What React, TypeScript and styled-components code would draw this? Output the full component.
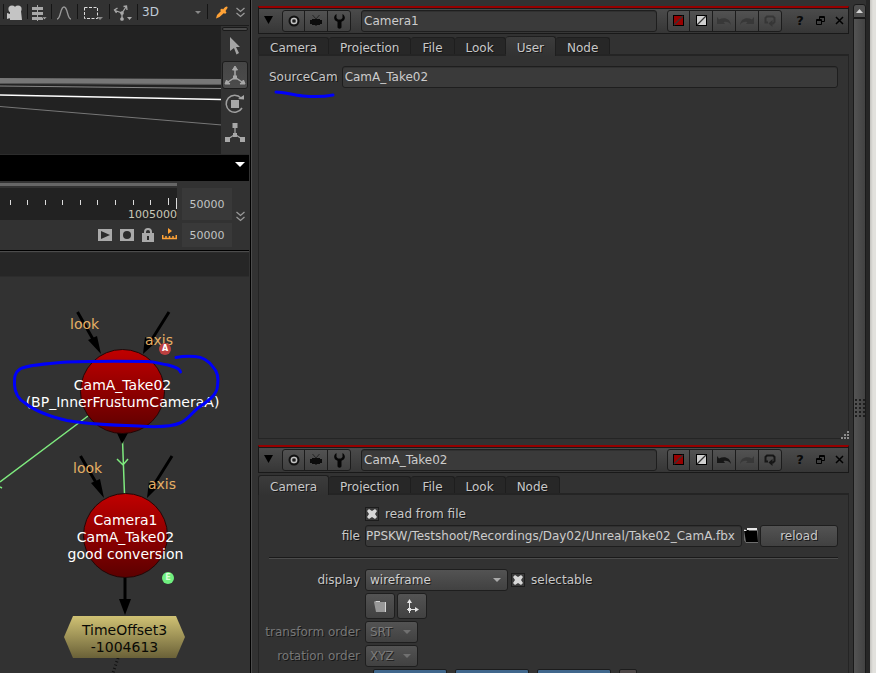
import React, { useState } from "react";
import styled, { createGlobalStyle, css } from "styled-components";

const GlobalStyle = createGlobalStyle`
  *, *::before, *::after { box-sizing: border-box; }
  html, body { margin: 0; height: 100%; }
  body {
    background: #323232;
    color: #c8c8c8;
    font-family: "DejaVu Sans", Verdana, sans-serif;
    font-size: 12px;
    line-height: 16px;
    overflow: hidden;
  }
  button, input, select { font: inherit; color: inherit; margin: 0; }
  button { padding: 0; border: 0; background: none; }
  svg { display: block; }
`;

/* ---------- window shell ---------- */

const Shell = styled.div`
  display: grid;
  grid-template-columns: 252px minmax(0, 1fr) 13px 4px 6px;
  height: 100vh;
  overflow: hidden;
`;

const LeftColumn = styled.div`
  display: flex;
  flex-direction: column;
  min-height: 0;
  padding-right: 2px;
  border-right: 1px solid #4c4c4c;
  box-shadow: inset -1px 0 #000;
`;

const RightColumn = styled.main`
  min-width: 0;
  padding: 6px 4px 0 6px;
  overflow: hidden;
`;

const WindowEdge = styled.div`
  background: #262626;
`;

const Desktop = styled.div`
  background: linear-gradient(90deg, #c4c3bf, #e2e1dd 3px);
`;

/* ---------- viewer toolbar ---------- */

const ToolBar = styled.div`
  display: flex;
  height: 26px;
  flex: none;
  padding-left: 3px;
  border-bottom: 1px solid #1c1c1c;
`;

const ToolCell = styled.button<{ $w: number }>`
  display: flex;
  align-items: center;
  justify-content: center;
  width: ${(p) => p.$w}px;
  position: relative;
  svg { flex: none; }
  &::before {
    content: "";
    position: absolute;
    left: 0;
    top: 4px;
    bottom: 6px;
    border-left: 1px solid #151515;
  }
`;

const ModeCell = styled.label`
  display: grid;
  width: 70px;
  align-items: center;
  margin: 4px 0 5px;
  border-left: 1px solid #151515;
  > * { grid-area: 1 / 1; }
  > svg { justify-self: end; margin-right: 6px; pointer-events: none; }
`;

const ModeSelect = styled.select`
  appearance: none;
  width: 100%;
  border: 0;
  padding: 0 4px;
  background: none;
  color: #c0ccd8;
`;

/* ---------- 3D viewport ---------- */

const Viewport = styled.div`
  display: flex;
  flex: none;
  height: 128px;
`;

const Scene = styled.svg`
  flex: 1;
  min-width: 0;
  height: 128px;
  background: #222;
`;

const ToolStrip = styled.div`
  display: flex;
  flex-direction: column;
  width: 28px;
  padding: 1px 1px 0;
`;

const StripGrip = styled.div`
  height: 4px;
  flex: none;
  border: 1px solid #1a1a1a;
  border-radius: 2px;
  background: #4a4a4a;
  margin-bottom: 1px;
`;

const StripButton = styled.button<{ $on?: boolean }>`
  display: grid;
  place-items: center;
  height: 28px;
  margin-bottom: 1px;
  flex: none;
  border: 1px solid transparent;
  border-radius: 3px;
  ${(p) => p.$on && css`
    border-color: #1c1c1c;
    background: linear-gradient(#454545, #4c4c4c);
  `}
`;

const InfoBar = styled.div`
  display: flex;
  flex: none;
  justify-content: flex-end;
  height: 27px;
  padding: 7px 4px 0;
  border-top: 1px solid #2c2c2c;
  background: #000;
`;

/* ---------- timeline ---------- */

const Timeline = styled.div`
  display: grid;
  flex: none;
  grid-template-columns: minmax(0, 1fr) 50px 17px;
  height: 69px;
  padding-top: 2px;
`;

const TrackSide = styled.div`
  padding-right: 5px;
`;

const RangeBar = styled.div`
  height: 3px;
  background: #666;
  margin-bottom: 2px;
`;

const Track = styled.div`
  display: flex;
  flex-direction: column;
  height: 32px;
  background: #222;
  svg { flex: none; }
`;

const FrameLabel = styled.span`
  align-self: flex-end;
  font-size: 11px;
  line-height: 11px;
  color: #c8c8b8;
`;

const TransportRow = styled.div`
  display: flex;
  justify-content: flex-end;
  align-items: center;
  gap: 8px;
  height: 29px;
  button { flex: none; }
`;

const FrameFields = styled.div`
  display: flex;
  flex-direction: column;
  gap: 3px;
  padding-top: 5px;
`;

const FrameInput = styled.input<{ $h: number }>`
  width: 50px;
  height: ${(p) => p.$h}px;
  border: 0;
  padding: 1px 0 0;
  background: #393939;
  text-align: center;
  color: #c0c4c4;
  font-size: 11px;
`;

const MoreButton = styled.button`
  display: grid;
  place-items: center;
  align-self: center;
  height: 20px;
`;

const GraphHeader = styled.div`
  flex: none;
  height: 27px;
  border-top: 1px solid #000;
  border-bottom: 1px solid #2c2c2c;
  background: #262626;
  box-shadow: inset 0 1px #4c4c4c, inset 0 2px #2c2c2c;
`;

/* ---------- node graph (free canvas) ---------- */

const Graph = styled.div`
  position: relative;
  flex: 1;
  min-height: 0;
  overflow: hidden;
  font-size: 14px;
  line-height: 17px;
`;

const GraphLayer = styled.svg`
  position: absolute;
  left: 0;
  top: 0;
  width: 250px;
  height: 396px;
  pointer-events: none;
`;

const NodeBox = styled.div<{ $x: number; $y: number; $w: number; $h: number }>`
  position: absolute;
  left: ${(p) => p.$x}px;
  top: ${(p) => p.$y}px;
  width: ${(p) => p.$w}px;
  height: ${(p) => p.$h}px;
  display: flex;
  flex-direction: column;
  align-items: center;
  justify-content: center;
  padding-top: 4px;
  white-space: nowrap;
`;

const CameraNode = styled(NodeBox)`
  border: 1px solid #240505;
  border-radius: 50%;
  background: linear-gradient(#c00000, #5c0000);
  color: #fff;
`;

const TimeNode = styled(NodeBox)`
  background: linear-gradient(#d0c274, #6a6138);
  clip-path: polygon(9px 0, calc(100% - 9px) 0, 100% 50%, calc(100% - 9px) 100%, 9px 100%, 0 50%);
  color: #0a0a05;
`;

const PortLabel = styled.span<{ $x: number; $y: number }>`
  position: absolute;
  left: ${(p) => p.$x}px;
  top: ${(p) => p.$y}px;
  color: #e6b065;
`;

const Badge = styled.span<{ $x: number; $y: number; $color: string; $ink: string }>`
  position: absolute;
  left: ${(p) => p.$x}px;
  top: ${(p) => p.$y}px;
  width: 12px;
  height: 12px;
  border-radius: 50%;
  background: ${(p) => p.$color};
  color: ${(p) => p.$ink};
  font-size: 8px;
  font-weight: bold;
  line-height: 12px;
  text-align: center;
`;

/* ---------- property panels ---------- */

const Panel = styled.section`
  margin-bottom: 6px;
`;

const PanelHeader = styled.header`
  display: flex;
  align-items: center;
  height: 28px;
  border: 1px solid #191919;
  border-top: 2px solid #960000;
  background: linear-gradient(#191919 1px, #4b4b4b 1px, #363636);
`;

const Fold = styled.button`
  width: 23px;
  height: 22px;
  padding-left: 5px;
  padding-bottom: 2px;
  display: flex;
  align-items: center;
`;

const ButtonGroup = styled.div`
  display: flex;
  border: 1px solid #1c1c1c;
  border-radius: 3px;
  background: linear-gradient(#525252, #404040);
  button {
    width: 23px;
    height: 20px;
    display: grid;
    place-items: center;
  }
  button:first-child { width: 21px; }
  button + button { border-left: 1px solid #1c1c1c; }
`;

const fieldStyle = css`
  height: 22px;
  min-width: 0;
  padding: 0 2px;
  border: 1px solid #1e1e1e;
  border-radius: 3px;
  background: #3a3a3a;
  color: #ccc;
  box-shadow: inset 0 1px #303030;
`;

const NameInput = styled.input`
  ${fieldStyle}
  flex: 1;
  padding-top: 1px;
  margin: 0 10px;
`;

const WindowButtons = styled.div`
  display: flex;
  padding-left: 8px;
  button {
    width: 20px;
    height: 22px;
    display: grid;
    place-items: center;
    color: #080808;
    font-weight: bold;
    font-size: 13px;
  }
  button:last-child { width: 18px; }
`;

const TabRow = styled.div`
  display: flex;
  align-items: flex-end;
  height: 20px;
`;

const Tab = styled.button<{ $active: boolean }>`
  height: 17px;
  padding: 4px 11px 0;
  line-height: 12px;
  border: 1px solid #1e1e1e;
  border-bottom: 0;
  border-left-width: 0;
  border-radius: 3px 3px 0 0;
  background: #272727;
  text-shadow: 1px 1px #161616;
  &:first-child { border-left-width: 1px; }
  ${(p) => p.$active && css`
    height: 20px;
    margin-bottom: -2px;
    padding: 2px 11px 0;
    background: linear-gradient(#3c3c3c, #323232);
    position: relative;
    z-index: 1;
  `}
`;

const PanelBody = styled.div<{ $minHeight: number }>`
  position: relative;
  min-height: ${(p) => p.$minHeight}px;
  border: 1px solid #242424;
  border-top-width: 2px;
  padding: 10px 10px 0;
`;

const Grip = styled.svg`
  position: absolute;
  right: -1px;
  bottom: -2px;
`;

const SourceRow = styled.div`
  display: flex;
  align-items: center;
  gap: 4px;
  input { flex: 1; }
`;

const SourceLabel = styled.label`
  position: relative;
  text-shadow: 1px 1px #161616;
`;

const Underline = styled.svg`
  position: absolute;
  left: 5px;
  top: 20px;
`;

const TextInput = styled.input`
  ${fieldStyle}
`;

const Form = styled.div`
  display: grid;
  grid-template-columns: 91px minmax(0, 1fr);
  column-gap: 5px;
  row-gap: 2px;
  align-items: center;
  text-shadow: 1px 1px #161616;
`;

const Label = styled.label<{ $dim?: boolean }>`
  justify-self: end;
  white-space: nowrap;
  color: ${(p) => (p.$dim ? "#777" : "#c8c8c8")};
`;

const Line = styled.div<{ $gap?: number; $indent?: number }>`
  grid-column: 2;
  display: flex;
  align-items: center;
  gap: ${(p) => p.$gap ?? 2}px;
  padding-left: ${(p) => p.$indent ?? 0}px;
  min-height: 18px;
`;

const PathInput = styled(TextInput)`
  flex: 1;
  padding: 0;
`;

const Rule = styled.hr`
  grid-column: 1 / -1;
  width: 100%;
  height: 2px;
  margin: 8px 0;
  border: 0;
  background: linear-gradient(#1a1a1a 1px, #4c4c4c 1px);
`;

const raised = css`
  border: 1px solid #1e1e1e;
  border-radius: 3px;
  background: linear-gradient(#535353, #414141);
`;

const ReloadButton = styled.button`
  ${raised}
  width: 78px;
  height: 22px;
  text-shadow: 1px 1px #161616;
`;

const BrowseButton = styled.button`
  width: 18px;
  height: 22px;
  display: grid;
  place-items: center;
`;

const IconButton = styled.button`
  ${raised}
  width: 30px;
  height: 26px;
  display: grid;
  place-items: center;
`;

const CheckLabel = styled.label`
  display: flex;
  align-items: center;
  gap: 6px;
`;

const CheckBox = styled.input.attrs({ type: "checkbox" })`
  appearance: none;
  width: 14px;
  height: 14px;
  border: 1px solid #1c1c1c;
  background: #3a3a3a;
  display: grid;
  place-items: center;
  &:checked::before {
    content: "";
    width: 10px;
    height: 10px;
    background: #d6d6d6;
    clip-path: polygon(0 2px, 2px 0, 5px 2px, 8px 0, 10px 2px, 8px 5px, 10px 8px, 8px 10px, 5px 8px, 2px 10px, 0 8px, 2px 5px);
  }
`;

const SelectWrap = styled.span<{ $w: number; $dim?: boolean }>`
  display: grid;
  align-items: center;
  width: ${(p) => p.$w}px;
  color: ${(p) => (p.$dim ? "#7c7c7c" : "#d0d0d0")};
  > * { grid-area: 1 / 1; }
  > svg { justify-self: end; margin-right: 7px; pointer-events: none; }
`;

const Select = styled.select`
  ${raised}
  appearance: none;
  width: 100%;
  height: 22px;
  padding: 0 4px;
  opacity: 1;
  text-shadow: 1px 1px #222;
`;

const ValueInput = styled.input<{ $w: number; $plain?: boolean }>`
  width: ${(p) => p.$w}px;
  height: 22px;
  padding: 0 4px;
  border: 1px solid #1c1c1c;
  border-radius: 2px;
  background: ${(p) => (p.$plain ? "#4e4848" : "#40678c")};
`;

/* ---------- scrollbar ---------- */

const ScrollTrack = styled.div`
  display: flex;
  flex-direction: column;
  padding-top: 4px;
`;

const ScrollUp = styled.button`
  display: grid;
  place-items: center;
  height: 14px;
  flex: none;
  border: 1px solid #1a1a1a;
  border-radius: 3px 3px 0 0;
  background: #4f4f4f;
`;

const ScrollThumb = styled.div`
  flex: 1;
  display: grid;
  justify-items: center;
  align-content: start;
  padding-top: 380px;
  border: 1px solid #1a1a1a;
  border-bottom: 0;
  background: linear-gradient(90deg, #545454, #424242);
`;

/* ---------- icons ---------- */

const Caret = ({ w = 8, color = "#888" }: { w?: number; color?: string }) => (
  <svg width={w} height={w / 2} viewBox="0 0 8 4">
    <path d="M0 0h8L4 4z" fill={color} />
  </svg>
);

const DoubleChevron = () => (
  <svg width="9" height="11" viewBox="0 0 9 11" fill="none" stroke="#999" strokeWidth="1.3">
    <path d="M.5 1l4 3.5 4-3.5M.5 6l4 3.5 4-3.5" />
  </svg>
);

const CameraIcon = () => (
  <svg width="16" height="16" viewBox="0 0 16 16" fill="#c4c4c4">
    <circle cx="5" cy="4" r="3.6" />
    <circle cx="11" cy="4" r="3.6" />
    <path d="M3 6h11l1 9H3zM3 9L0 8v6l3-1z" />
  </svg>
);

const AlignIcon = () => (
  <svg width="16" height="16" viewBox="0 0 16 16" fill="#a8a8a8">
    <path d="M1 2h11v3H1zM1 7h11v3H1zM1 12h11v3H1zM6 0h1v16H6z" />
    <path d="M11 12h5l-2.500 2.500z" stroke="#323232" strokeWidth=".5" />
  </svg>
);

const CurveIcon = () => (
  <svg width="16" height="14" viewBox="0 0 16 14" fill="none" stroke="#999" strokeWidth="1.300">
    <path d="M1 13c4 0 3-12 7-12s3 12 7 12" />
  </svg>
);

const MarqueeIcon = () => (
  <svg width="20" height="14" viewBox="0 0 20 14">
    <path d="M1.500 1.500h13v11h-13z" fill="none" stroke="#dcdcdc" strokeDasharray="3 1.500" />
    <path d="M14 11h6l-3 3z" fill="#888" />
  </svg>
);

const SkeletonIcon = () => (
  <svg width="20" height="16" viewBox="0 0 20 16" fill="none" stroke="#a8a8a8" strokeWidth="1.300">
    <path d="M9 8L2 5.500M9 8l4-6M9 8v6M4.500 3L1.500 5l2 3M10.500 1.500l3-.5.5 4" />
    <circle cx="9" cy="8" r="1.200" fill="#a8a8a8" />
    <circle cx="9" cy="14" r="1.200" fill="#a8a8a8" />
    <path d="M14 12h5l-2.500 3z" fill="#a8a8a8" stroke="none" />
  </svg>
);

const DropperIcon = () => (
  <svg width="12" height="13" viewBox="0 0 12 13" fill="#ffa236">
    <path d="M0 12.500l1-3.500 4-4-1-1 2-1.500 1 1C9 .5 12-.5 11.500 2L9.500 5l1 1.500L9 8 8 7l-4.500 4z" />
  </svg>
);

const PointerIcon = () => (
  <svg width="12" height="20" viewBox="0 0 12 20" fill="#a4a4a4">
    <path d="M1 1l10 10H7l3 6-2.500 1.500L5 12l-4 3z" />
  </svg>
);

const MoveIcon = () => (
  <svg width="22" height="21" viewBox="0 0 22 21" fill="#a8a8a8" stroke="#a8a8a8">
    <path d="M11 13V4M10 13l-6 4M12 13l6 4" fill="none" strokeWidth="1.500" />
    <path d="M11 1L8.500 5h5zM1 19l1.500-4L6 19zM21 19l-1.500-4L16 19z" />
    <rect x="9.500" y="11" width="3" height="3" />
  </svg>
);

const RotateIcon = () => (
  <svg width="20" height="20" viewBox="0 0 20 20">
    <path d="M16 4A8.500 8.500 0 1 0 17 14" fill="none" stroke="#a0a0a0" strokeWidth="1.500" />
    <path d="M13 5l6 .5V1z" fill="#a8a8a8" />
    <rect x="6" y="6" width="8" height="8" fill="#a8a8a8" />
  </svg>
);

const ScaleIcon = () => (
  <svg width="20" height="20" viewBox="0 0 20 20" fill="#a8a8a8">
    <path d="M7.500 0h5v5h-5zM0 14h5v5H0zM15 14h5v5h-5zM8 10h4v4H8z" />
    <path d="M10 4v8M9 12l-6 4M11 12l6 4" stroke="#a8a8a8" strokeWidth="1.200" />
  </svg>
);

const TargetIcon = () => (
  <svg width="14" height="14" viewBox="0 0 14 14" fill="none">
    <circle cx="7" cy="7" r="4.500" stroke="#101010" strokeWidth="2" />
    <circle cx="7" cy="7" r="2.700" stroke="#c4c4c4" strokeWidth="1.200" />
    <circle cx="7" cy="7" r="1" fill="#101010" />
  </svg>
);

const PlugIcon = () => (
  <svg width="12" height="11" viewBox="0 0 12 11">
    <path d="M0 5h2V4h8v1h2v4h-2v1H7l-1 1-1-1H2V9H0z" fill="#0c0c0c" />
    <path d="M2.500 0L6 4l3.500-4" fill="none" stroke="#262626" />
  </svg>
);

const WrenchIcon = () => (
  <svg width="13" height="16" viewBox="0 0 13 16" fill="#060606">
    <path d="M3.500 1C0 3 .5 7.500 4.500 8.700V14c0 2.300 4 2.300 4 0V8.700C12.500 7.500 13 3 9.500 1v4L8 6.500H5L3.500 5z" />
  </svg>
);

const SlashSquare = ({ fill }: { fill: string }) => (
  <svg width="11" height="11" viewBox="0 0 11 11">
    <rect x=".5" y=".5" width="10" height="10" fill={fill} stroke="#000" />
    <path d="M1 10L10 1" stroke="#333" strokeWidth="1.300" />
  </svg>
);

const UndoIcon = ({ on, flip }: { on: boolean; flip?: boolean }) => (
  <svg width="14" height="8" viewBox="0 0 14 8" fill={on ? "#161616" : "#383838"}>
    <path
      transform={flip ? "translate(14 0) scale(-1 1)" : undefined}
      d="M0 0l2 2.500C7 0 13 1 14 8c-2-3-4-3.500-7.500-3L8 7H0z"
    />
  </svg>
);

const RevertIcon = ({ on }: { on: boolean }) => (
  <svg width="12" height="12" viewBox="0 0 12 12">
    <path d="M4 7.500H1.500V3L3 1.500h6L10.500 3v4L9 8.500H7" fill="none" stroke={on ? "#161616" : "#363636"} strokeWidth="2" />
    <path d="M8.500 5v7L4.500 8.500z" fill={on ? "#161616" : "#363636"} />
  </svg>
);

const FloatIcon = () => (
  <svg width="9" height="9" viewBox="0 0 9 9" fill="none" stroke="#000">
    <path d="M.5 3.500h5v5h-5zM0 4.500h5M3.500 3V.5h5v5H6M3 1.500h5" />
  </svg>
);

const CloseIcon = () => (
  <svg width="9" height="9" viewBox="0 0 9 9" stroke="#000" strokeWidth="1.500">
    <path d="M1 1l7 7M8 1L1 8" />
  </svg>
);

const FilmIcon = () => (
  <svg width="16" height="16" viewBox="0 0 16 16">
    <path d="M1 1h13l1 2v12H3L1 12z" fill="#6e6e6e" />
    <path d="M1 2l4-1 1 2h8l1 11H3z" fill="#000" />
    <path d="M4 0h10v2H4zM1 2h3l-1 1H1z" fill="#e8e8e8" />
  </svg>
);

const FolderIcon = () => (
  <svg width="13" height="13" viewBox="0 0 13 13">
    <path d="M0 2l1-1h4l1 1h6v10H2z" fill="#989898" />
    <path d="M2 1h4v1H2zM11 2h1v10h-1z" fill="#d4d4d4" />
  </svg>
);

const AxesIcon = () => (
  <svg width="13" height="15" viewBox="0 0 13 15" fill="#e4e4e4">
    <path d="M3 2h1v12H3zM1 10h10v1H1zM3.500 0L6 4H1zM9 8l4 2.500L9 13zM2 9h3v3H2z" />
  </svg>
);

/* ---------- composite pieces ---------- */

const TICKS = [10, 27, 45, 62, 80, 97, 115, 133, 150];

function ViewerTools() {
  return (
    <ToolBar>
      <ToolCell $w={24} aria-label="Camera"><CameraIcon /></ToolCell>
      <ToolCell $w={24} aria-label="Align"><AlignIcon /></ToolCell>
      <ToolCell $w={26} aria-label="Curve"><CurveIcon /></ToolCell>
      <ToolCell $w={32} aria-label="Selection"><MarqueeIcon /></ToolCell>
      <ToolCell $w={28} aria-label="Skeleton"><SkeletonIcon /></ToolCell>
      <ModeCell>
        <ModeSelect aria-label="View mode"><option>3D</option></ModeSelect>
        <Caret w={6} />
      </ModeCell>
      <ToolCell $w={29} aria-label="Pick colour"><DropperIcon /></ToolCell>
      <MoreButton aria-label="More tools"><DoubleChevron /></MoreButton>
    </ToolBar>
  );
}

function Viewer() {
  return (
    <Viewport>
      <Scene viewBox="0 26 221 128" preserveAspectRatio="none">
        <path d="M0 78l222 1v6L0 83z" fill="#777" />
        <path d="M0 83.500l222 1" stroke="#555" />
        <path d="M0 86l222 2.500" stroke="#888" />
        <path d="M0 95l222 4.500" stroke="#fff" strokeWidth="1.300" />
        <path d="M0 106.500L222 125" stroke="#777" />
      </Scene>
      <ToolStrip>
        <StripGrip />
        <StripButton aria-label="Select"><PointerIcon /></StripButton>
        <StripButton aria-label="Translate" $on><MoveIcon /></StripButton>
        <StripButton aria-label="Rotate"><RotateIcon /></StripButton>
        <StripButton aria-label="Scale"><ScaleIcon /></StripButton>
      </ToolStrip>
    </Viewport>
  );
}

function TimelineBar() {
  return (
    <Timeline>
      <TrackSide>
        <RangeBar />
        <Track>
          <svg width="177" height="21" viewBox="0 0 177 21">
            {TICKS.map((x) => <path key={x} d={`M${x + 0.5} 12v5`} stroke="#ddd" />)}
            <path d="M168.500 10v7M176.500 10v11" stroke="#ddd" />
          </svg>
          <FrameLabel>1005000</FrameLabel>
        </Track>
        <TransportRow>
          <button aria-label="Play">
            <svg width="14" height="12"><path d="M0 0h14v12H0z" fill="#aaa" /><path d="M3 2l9 4-9 4z" fill="#2c2c2c" /></svg>
          </button>
          <button aria-label="Record">
            <svg width="14" height="12"><path d="M0 0h14v12H0z" fill="#aaa" /><circle cx="7" cy="6" r="4" fill="#2c2c2c" /></svg>
          </button>
          <button aria-label="Lock range">
            <svg width="12" height="14">
              <path d="M3 7V4a3 3 0 0 1 6 0v3" fill="none" stroke="#aaa" strokeWidth="2" />
              <path d="M0 5h12v9H0z" fill="#aaa" /><path d="M5 8h2v4H5z" fill="#2c2c2c" />
            </svg>
          </button>
          <button aria-label="Frame range">
            <svg width="15" height="13" fill="none" stroke="#ffa236" strokeWidth="1.500">
              <path d="M.7 7v3.500h13.600V7M4 10V8M7.500 10V8M11 10V8" />
              <path d="M6 0l4 3-4 3z" fill="#ffa236" stroke="none" />
            </svg>
          </button>
        </TransportRow>
      </TrackSide>
      <FrameFields>
        <FrameInput $h={32} aria-label="Last frame" defaultValue="50000" />
        <FrameInput $h={24} aria-label="Range end" defaultValue="50000" />
      </FrameFields>
      <MoreButton aria-label="More timeline options"><DoubleChevron /></MoreButton>
    </Timeline>
  );
}

function NodeGraph() {
  return (
    <Graph>
      <GraphLayer viewBox="0 277 250 396">
        <g stroke="#7eea7e" strokeWidth="1.500" fill="none">
          <path d="M88 416L0 482M122.500 440l2 54M117 459l6 6 5-6" />
          <path d="M0 487l2 1" />
        </g>
        <g stroke="#000" strokeWidth="3">
          <path d="M77.500 312L94 341M169 312l-20 32M80.500 456L98 486M172 456l-20 32M125 577v24" />
        </g>
        <path d="M101 354l-13-14 9-4zM143 354l2-17 10 6zM104 498L91 483l9-4zM147 498l2-17 9 6zM119 599h12l-6 16zM117 433h11l-6 11z" />
        <path d="M118 658l-5 15" stroke="#111" strokeWidth="3" strokeDasharray="1 2.500" />
      </GraphLayer>
      <CameraNode $x={80} $y={72} $w={85} $h={85}>
        <span>CamA_Take02</span>
        <span>(BP_InnerFrustumCameraA)</span>
      </CameraNode>
      <CameraNode $x={83} $y={216} $w={85} $h={85}>
        <span>Camera1</span>
        <span>CamA_Take02</span>
        <span>good conversion</span>
      </CameraNode>
      <TimeNode $x={64} $y={339} $w={121} $h={42}>
        <span>TimeOffset3</span>
        <span>-1004613</span>
      </TimeNode>
      <PortLabel $x={70} $y={39}>look</PortLabel>
      <PortLabel $x={145} $y={55}>axis</PortLabel>
      <PortLabel $x={73} $y={183}>look</PortLabel>
      <PortLabel $x={148} $y={199}>axis</PortLabel>
      <Badge $x={159} $y={66} $color="#bd4040" $ink="#fff">A</Badge>
      <Badge $x={162} $y={295} $color="#70f080" $ink="#d8ffd8">E</Badge>
      <GraphLayer viewBox="0 277 250 396">
        <path
          d="M180.500 372C179 367 173 367 168 365C160 364 156 361.500 147 361.500C115 361 95 361 67 362C45 364 27 365 20 369C14 373 14.500 378 14.500 385C15 393 18 399 25 403C36 412 52 417 67 420.500C90 425 120 425 147 426.500C160 427 173 426 180 423C188 420 193 411 200 406.500C208 401 217 395 217.500 386C219 377 217 371 213 367C208 360 203 357 195 356.500C189 356 183 356 176 357.500"
          fill="none"
          stroke="#0000fa"
          strokeWidth="3"
          strokeLinecap="round"
        />
      </GraphLayer>
    </Graph>
  );
}

function PropertyPanel(props: {
  name: string;
  tabs: string[];
  initial: string;
  minHeight: number;
  history: boolean;
  children: React.ReactNode;
}) {
  const { name, tabs, initial, minHeight, history, children } = props;
  const [active, setActive] = useState(initial);
  return (
    <Panel>
      <PanelHeader>
        <Fold aria-label="Collapse"><svg width="9" height="8"><path d="M0 0h9L4.500 8z" /></svg></Fold>
        <ButtonGroup>
          <button aria-label="Center node"><TargetIcon /></button>
          <button aria-label="Inputs"><PlugIcon /></button>
          <button aria-label="Settings"><WrenchIcon /></button>
        </ButtonGroup>
        <NameInput aria-label="Node name" defaultValue={name} />
        <ButtonGroup>
          <button aria-label="Node colour"><SlashSquare fill="#980000" /></button>
          <button aria-label="Outline colour"><SlashSquare fill="#cfcfcf" /></button>
          <button aria-label="Undo"><UndoIcon on={history} /></button>
          <button aria-label="Redo"><UndoIcon on={false} flip /></button>
          <button aria-label="Revert"><RevertIcon on={history} /></button>
        </ButtonGroup>
        <WindowButtons>
          <button aria-label="Help">?</button>
          <button aria-label="Float"><FloatIcon /></button>
          <button aria-label="Close"><CloseIcon /></button>
        </WindowButtons>
      </PanelHeader>
      <TabRow role="tablist">
        {tabs.map((t) => (
          <Tab key={t} role="tab" aria-selected={t === active} $active={t === active} onClick={() => setActive(t)}>
            {t}
          </Tab>
        ))}
      </TabRow>
      <PanelBody $minHeight={minHeight}>{children}</PanelBody>
    </Panel>
  );
}

function OrderSelect({ id, label, value }: { id: string; label: string; value: string }) {
  return (
    <>
      <Label htmlFor={id} $dim>{label}</Label>
      <SelectWrap $w={53} $dim>
        <Select id={id} disabled><option>{value}</option></Select>
        <Caret color="#707070" />
      </SelectWrap>
    </>
  );
}

export default function App() {
  return (
    <>
      <GlobalStyle />
      <Shell>
        <LeftColumn>
          <ViewerTools />
          <Viewer />
          <InfoBar><Caret w={10} color="#fff" /></InfoBar>
          <TimelineBar />
          <GraphHeader />
          <NodeGraph />
        </LeftColumn>
        <RightColumn>
          <PropertyPanel
            name="Camera1"
            tabs={["Camera", "Projection", "File", "Look", "User", "Node"]}
            initial="User"
            minHeight={385}
            history={false}
          >
            <SourceRow>
              <SourceLabel htmlFor="source">
                SourceCam
                <Underline width="62" height="10" viewBox="0 0 62 10">
                  <path d="M2 3c8 0 16 3 27 4s20 1 30-1" fill="none" stroke="#0000fa" strokeWidth="3" strokeLinecap="round" />
                </Underline>
              </SourceLabel>
              <TextInput id="source" defaultValue="CamA_Take02" />
            </SourceRow>
            <Grip width="9" height="9" fill="#8c8c8c">
              <path d="M7 0h2v2H7zM7 3h2v2H7zM4 3h2v2H4zM7 6h2v2H7zM4 6h2v2H4zM1 6h2v2H1z" />
            </Grip>
          </PropertyPanel>
          <PropertyPanel
            name="CamA_Take02"
            tabs={["Camera", "Projection", "File", "Look", "Node"]}
            initial="Camera"
            minHeight={180}
            history
          >
            <Form>
              <Line>
                <CheckLabel><CheckBox defaultChecked />read from file</CheckLabel>
              </Line>
              <Label htmlFor="file">file</Label>
              <Line $gap={0}>
                <PathInput id="file" defaultValue="PPSKW/Testshoot/Recordings/Day02/Unreal/Take02_CamA.fbx" />
                <BrowseButton aria-label="Browse"><FilmIcon /></BrowseButton>
                <ReloadButton>reload</ReloadButton>
              </Line>
              <Rule />
              <Label htmlFor="display">display</Label>
              <Line $gap={3}>
                <SelectWrap $w={143}>
                  <Select id="display"><option>wireframe</option></Select>
                  <Caret color="#aaa" />
                </SelectWrap>
                <CheckLabel><CheckBox defaultChecked />selectable</CheckLabel>
              </Line>
              <Line>
                <IconButton aria-label="Import"><FolderIcon /></IconButton>
                <IconButton aria-label="Snap"><AxesIcon /></IconButton>
              </Line>
              <OrderSelect id="xform" label="transform order" value="SRT" />
              <OrderSelect id="rot" label="rotation order" value="XYZ" />
              <Line $gap={8} $indent={8}>
                <ValueInput $w={74} aria-label="Translate x" />
                <ValueInput $w={74} aria-label="Translate y" />
                <ValueInput $w={74} aria-label="Translate z" />
                <ValueInput $w={18} $plain aria-label="Animation" />
              </Line>
            </Form>
          </PropertyPanel>
        </RightColumn>
        <ScrollTrack>
          <ScrollUp aria-label="Scroll up">
            <svg width="7" height="4"><path d="M0 4h7L3.500 0z" fill="#d4d4d4" /></svg>
          </ScrollUp>
          <ScrollThumb>
            <svg width="10" height="18" fill="#1e1e1e">
              {[0, 4, 8, 12, 16].map((y) => <path key={y} d={`M0 ${y}h2v2H0zM4 ${y}h2v2H4zM8 ${y}h2v2H8z`} />)}
            </svg>
          </ScrollThumb>
        </ScrollTrack>
        <WindowEdge />
        <Desktop />
      </Shell>
    </>
  );
}
